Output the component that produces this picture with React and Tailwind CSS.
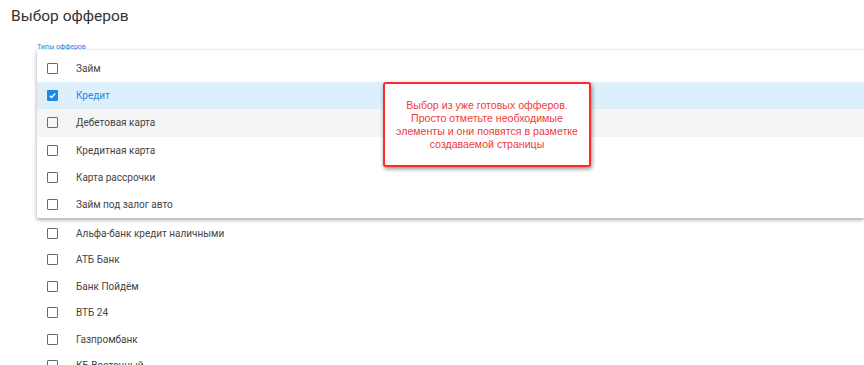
import { useState } from 'react';

const offerTypes = ['Займ', 'Кредит', 'Дебетовая карта', 'Кредитная карта', 'Карта рассрочки', 'Займ под залог авто'];
const offers = ['Альфа-банк кредит наличными', 'АТБ Банк', 'Банк Пойдём', 'ВТБ 24', 'Газпромбанк', 'КБ Восточный'];

function Checkbox({ checked }) {
  if (checked) {
    return (
      <span className="flex h-[11px] w-[11px] items-center justify-center rounded-[1px] bg-[#1e88e5]">
        <svg width="9" height="9" viewBox="0 0 10 10" fill="none">
          <path d="M2 5.2l2 2 4-4.4" stroke="white" strokeWidth="1.4" />
        </svg>
      </span>
    );
  }
  return <span className="block h-[11px] w-[11px] rounded-[1px] border-[1.5px] border-[#6b6b6b]" />;
}

export default function App() {
  const [selected] = useState(['Кредит']);

  return (
    <div className="relative h-[365px] w-[864px] overflow-hidden bg-white font-['Roboto',sans-serif]">
      <h1 className="pl-[11px] pt-[6px] text-[15.5px] leading-[20px] text-[#333]">Выбор офферов</h1>

      <div className="pl-[37px] pt-[18px]">
        <div className="text-[7px] leading-[6px] text-[#1e88e5]">Типы офферов</div>

        {/* dropdown */}
        <div className="relative z-10 bg-white pt-[5px] shadow-[0_2px_4px_rgba(0,0,0,0.3),0_0_3px_rgba(0,0,0,0.1)]">
          {offerTypes.map((t, i) => {
            const isChecked = selected.includes(t);
            return (
              <div
                key={t}
                className={
                  'flex h-[27.2px] items-center text-[10px] ' +
                  (isChecked ? 'bg-[#deeffc] text-[#1e88e5]' : i === 2 ? 'bg-[#f5f5f5] text-[#444]' : 'text-[#444]')
                }
              >
                <div className="ml-[10px] w-[29px]">
                  <Checkbox checked={isChecked} />
                </div>
                <span>{t}</span>
              </div>
            );
          })}
        </div>

        <div className="mt-[2px]">
          {offers.map((t) => (
            <div key={t} className="flex h-[26.5px] items-center text-[10px] text-[#444]">
              <div className="ml-[10px] w-[29px]">
                <Checkbox />
              </div>
              <span>{t}</span>
            </div>
          ))}
        </div>
      </div>

      {/* hint */}
      <div className="absolute left-[383px] top-[82px] z-20 flex h-[85px] w-[208px] items-center justify-center rounded-[3px] border-2 border-[#ff2b2b] bg-white shadow-[1px_2px_4px_rgba(0,0,0,0.45)]">
        <p className="text-center font-['Liberation_Sans',sans-serif] text-[10.6px] leading-[13px] text-[#f03a3a]">
          Выбор из уже готовых офферов.
          <br />
          Просто отметьте необходимые
          <br />
          элементы и они появятся в разметке
          <br />
          создаваемой страницы
        </p>
      </div>
    </div>
  );
}
